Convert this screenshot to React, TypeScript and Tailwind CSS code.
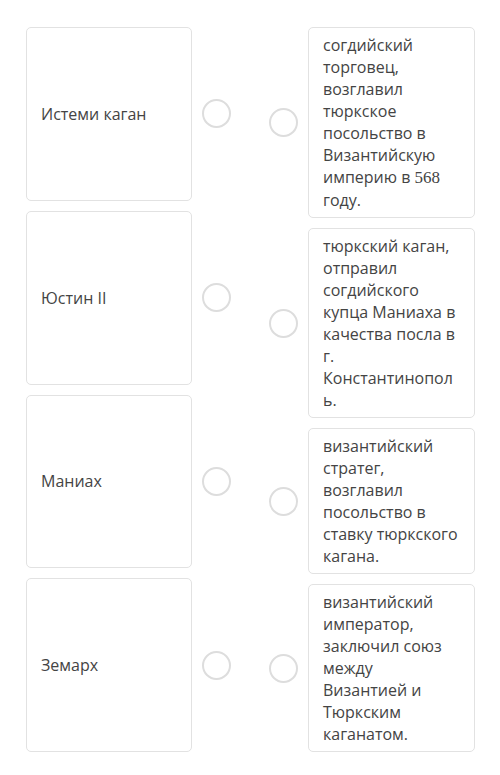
const leftItems = ['Истеми каган', 'Юстин II', 'Маниах', 'Земарх']

const rightItems: React.ReactNode[] = [
  <>
    согдийский торговец, возглавил тюркское посольство в Византийскую империю в{' '}
    <span className="font-['Liberation_Serif',serif] text-[17px]">568</span> году.
  </>,
  <>тюркский каган, отправил согдийского купца Маниаха в качества посла в г. Константинополь.</>,
  <>византийский стратег, возглавил посольство в ставку тюркского кагана.</>,
  <>византийский император, заключил союз между Византией и Тюркским каганатом.</>,
]

function Dot() {
  return <div className="w-[29px] h-[29px] shrink-0 rounded-full border-2 border-[#dddddd] bg-white" />
}

export default function App() {
  return (
    <div className="w-[500px] min-h-[775px] bg-white px-[26px] pt-[27px] pb-[23px] font-['Open_Sans',sans-serif] text-[16px] leading-[22px] text-[#444444]">
      <div className="flex items-stretch">
        <div className="flex flex-col gap-[10px]">
          {leftItems.map(item => (
            <div key={item} className="flex flex-1 items-center gap-[10px]">
              <div className="flex h-full w-[166px] items-center rounded-[5px] border border-[#e2e2e2] px-[14px]">
                {item}
              </div>
              <Dot />
            </div>
          ))}
        </div>
        <div className="ml-[38px] flex flex-col gap-[10px]">
          {rightItems.map((item, i) => (
            <div key={i} className="flex items-center gap-[10px]">
              <Dot />
              <div className="w-[167px] rounded-[5px] border border-[#e2e2e2] pl-[14px] pr-[15px] py-[6px] [overflow-wrap:anywhere]">
                {item}
              </div>
            </div>
          ))}
        </div>
      </div>
    </div>
  )
}
